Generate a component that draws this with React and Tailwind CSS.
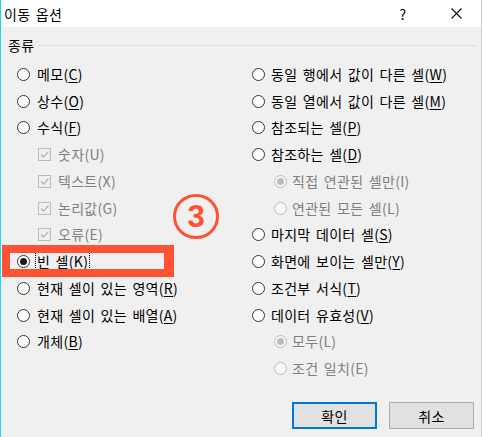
import React from "react";

const FONT = "font-['Noto_Sans_CJK_KR','Malgun_Gothic',sans-serif]";

function Radio({ checked, disabled }) {
  return (
    <span
      className={`relative flex w-[13px] h-[13px] shrink-0 items-center justify-center rounded-full border ${
        disabled ? "border-[#bcbcbc] bg-[#f7f7f7]" : "border-[#333333] bg-white"
      }`}
    >
      {checked && (
        <span
          className={`w-[7px] h-[7px] rounded-full ${disabled ? "bg-[#bcbcbc]" : "bg-[#1a1a1a]"}`}
        />
      )}
    </span>
  );
}

function Check() {
  return (
    <span className="flex w-[13px] h-[13px] shrink-0 items-center justify-center border border-[#bcbcbc] bg-[#f0f0f0]">
      <svg width="11" height="11" viewBox="0 0 11 11">
        <path d="M2 5.5 L4.5 8 L9.5 2.5" fill="none" stroke="#b5b5b5" strokeWidth="1.3" />
      </svg>
    </span>
  );
}

function Label({ text, k, disabled, focus }) {
  return (
    <span
      className={`leading-[16px] whitespace-pre ${disabled ? "text-[#7f7f7f]" : "text-black"} ${
        focus ? "outline outline-1 outline-dotted outline-black px-[1px] -ml-[1px]" : ""
      }`}
    >
      {text}(
      {disabled ? k : <span className="underline underline-offset-[2px] decoration-[1px]">{k}</span>})
    </span>
  );
}

function Row({ children, indent = "" }) {
  return <div className={`flex items-center h-[26.75px] ${indent}`}>{children}</div>;
}

function RadioRow({ text, k, checked, disabled, focus, indent = "", gap = "ml-[7px]" }) {
  return (
    <Row indent={indent}>
      <Radio checked={checked} disabled={disabled} />
      <span className={gap}>
        <Label text={text} k={k} disabled={disabled} focus={focus} />
      </span>
    </Row>
  );
}

function CheckRow({ text, k }) {
  return (
    <Row indent="pl-[21px]">
      <Check />
      <span className="ml-[7px]">
        <Label text={text} k={k} disabled />
      </span>
    </Row>
  );
}

export default function App() {
  return (
    <div
      className={`relative w-[482px] h-[437px] bg-[#f0f0f0] border-l border-l-[#1fd6f0] border-r border-r-[#cfcfcf] text-[14px] tracking-[0.3px] [word-spacing:2px] ${FONT} overflow-hidden`}
    >
      {/* Title bar */}
      <div className="flex items-center h-[27px] bg-white">
        <span className="pl-[3px] text-black leading-[16px]">이동 옵션</span>
        <div className="flex-1" />
        <span className="w-[14px] text-center text-black leading-[16px] mr-[41px]">?</span>
        <svg width="11" height="11" viewBox="0 0 11 11" className="mr-[19px]">
          <path d="M0.5 0.5 L10.5 10.5 M10.5 0.5 L0.5 10.5" stroke="#111" strokeWidth="1.1" />
        </svg>
      </div>

      {/* Body */}
      <div className="pt-[9px]">
        <div className="flex items-center h-[18px] pl-[7px]">
          <span className="leading-[16px] text-black">종류</span>
          <div className="flex-1 h-px bg-[#dcdcdc] ml-[5px] mr-[5px]" />
        </div>

        <div className="flex mt-[7px] pl-[16px]">
          {/* Left column */}
          <div className="w-[235px] flex flex-col">
            <RadioRow text="메모" k="C" />
            <RadioRow text="상수" k="O" />
            <RadioRow text="수식" k="F" />
            <CheckRow text="숫자" k="U" />
            <CheckRow text="텍스트" k="X" />
            <CheckRow text="논리값" k="G" />
            <CheckRow text="오류" k="E" />
            <RadioRow text="빈 셀" k="K" checked focus />
            <RadioRow text="현재 셀이 있는 영역" k="R" />
            <RadioRow text="현재 셀이 있는 배열" k="A" />
            <RadioRow text="개체" k="B" />
          </div>

          {/* Right column */}
          <div className="flex flex-col">
            <RadioRow text="동일 행에서 값이 다른 셀" k="W" gap="ml-[6px]" />
            <RadioRow text="동일 열에서 값이 다른 셀" k="M" gap="ml-[6px]" />
            <RadioRow text="참조되는 셀" k="P" gap="ml-[6px]" />
            <RadioRow text="참조하는 셀" k="D" gap="ml-[6px]" />
            <RadioRow text="직접 연관된 셀만" k="I" checked disabled indent="pl-[22px]" gap="ml-[5px]" />
            <RadioRow text="연관된 모든 셀" k="L" disabled indent="pl-[22px]" gap="ml-[5px]" />
            <RadioRow text="마지막 데이터 셀" k="S" gap="ml-[6px]" />
            <RadioRow text="화면에 보이는 셀만" k="Y" gap="ml-[6px]" />
            <RadioRow text="조건부 서식" k="T" gap="ml-[6px]" />
            <RadioRow text="데이터 유효성" k="V" gap="ml-[6px]" />
            <RadioRow text="모두" k="L" checked disabled indent="pl-[22px]" gap="ml-[5px]" />
            <RadioRow text="조건 일치" k="E" disabled indent="pl-[22px]" gap="ml-[5px]" />
          </div>
        </div>

        {/* Buttons */}
        <div className="flex justify-end gap-[12px] pr-[7px] mt-[20px]">
          <button className="w-[85px] h-[27px] border-2 border-[#0078d7] bg-[#e1e1e1] text-black leading-[16px]">
            확인
          </button>
          <button className="w-[85px] h-[27px] border border-[#adadad] bg-[#e1e1e1] text-black leading-[16px]">
            취소
          </button>
        </div>
      </div>

      {/* Annotation overlays */}
      <div className="absolute left-[1px] top-[245px] w-[172px] h-[32px] border-[8px] border-[#ff5232] border-r-[10px]" />
      <div className="absolute left-[172px] top-[194px] w-[46px] h-[45px] rounded-full border-[3px] border-[#ff5232] flex items-center justify-center">
        <span className="text-[#ff5232] text-[31px] font-bold leading-none tracking-normal font-['Liberation_Sans',sans-serif]">3</span>
      </div>
    </div>
  );
}
